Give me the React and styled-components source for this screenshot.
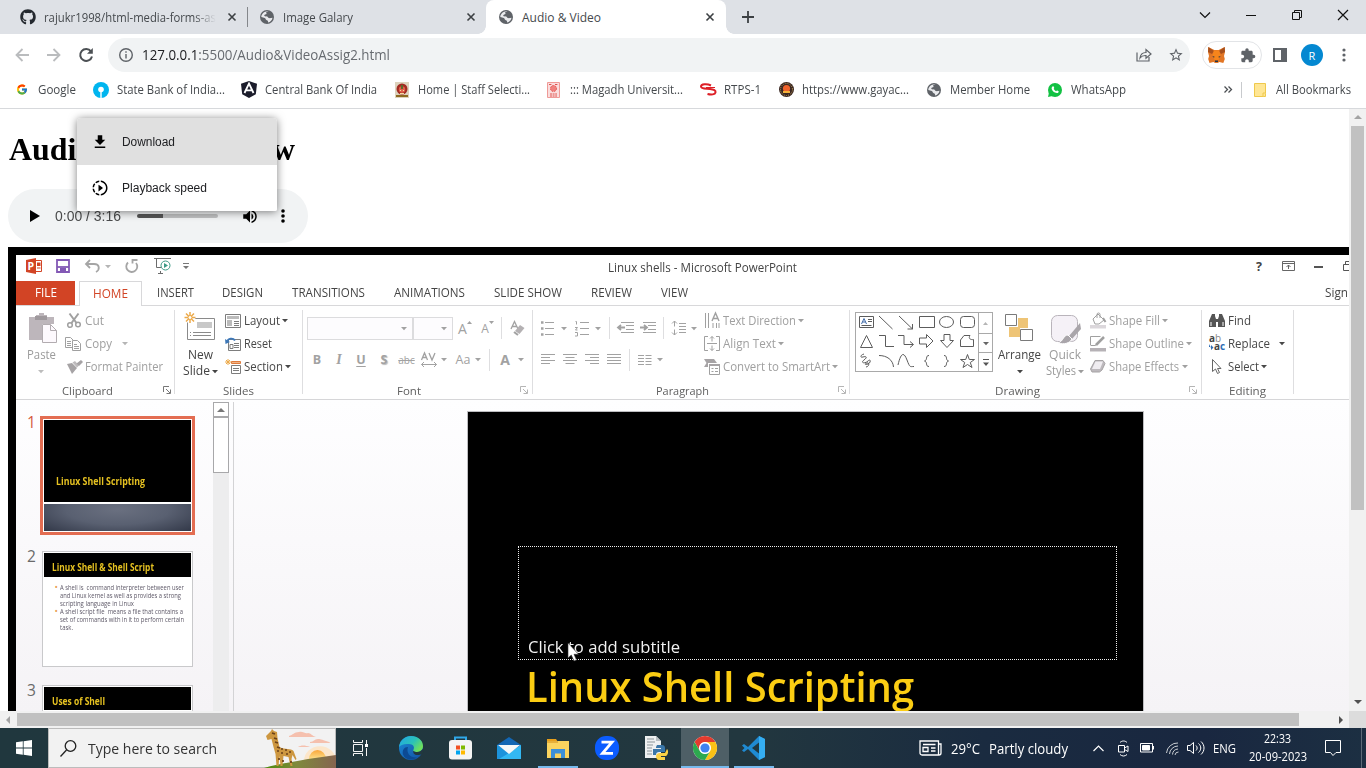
import React, { useLayoutEffect, useRef, useState } from "react";
import styled, { createGlobalStyle, css } from "styled-components";
import { FaGithub } from "react-icons/fa";
import { FcGoogle } from "react-icons/fc";
import { MdExtension, MdVolumeUp, MdStarBorder, MdSlowMotionVideo, MdFileDownload } from "react-icons/md";

const ui = `"Open Sans", "Noto Sans", sans-serif`;

const Global = createGlobalStyle`
  *, *::before, *::after { box-sizing: border-box; }
  html, body { margin: 0; padding: 0; overflow: hidden; }
  body { font-family: ${ui}; font-size: 12px; color: #3c4043; background: #fff; }
`;

/* ---------- text fitted to a measure ---------- */
const FitBox = styled.span`
  flex: none;
  display: block;
  white-space: pre;
  margin-left: ${(p) => p.$ml || 0}px;
  & > span { display: inline-block; transform-origin: 0 50%; }
`;

function Fit({ w, ml, children, className }) {
  const ref = useRef(null);
  const [k, setK] = useState(1);
  useLayoutEffect(() => {
    if (ref.current.offsetWidth) setK(w / parseFloat(getComputedStyle(ref.current).width));
  }, [w, children]);
  return (
    <FitBox $ml={ml} className={className} style={{ width: w }}>
      <span ref={ref} style={{ transform: `scaleX(${k})` }}>{children}</span>
    </FitBox>
  );
}

/* ---------- drawings ---------- */
const Svg = styled.svg`
  flex: none;
  display: block;
  overflow: visible;
  margin-left: ${(p) => p.$ml || 0}px;
`;
const Ico = ({ w = 16, h = 16, ml, vb, children, ...rest }) => (
  <Svg width={w} height={h} $ml={ml} viewBox={vb || `0 0 ${w} ${h}`} fill="none" stroke="currentColor" strokeWidth="1" {...rest}>
    {children}
  </Svg>
);
const IconHold = styled.span`
  flex: none;
  display: flex;
  width: ${(p) => p.$w || 16}px;
  justify-content: center;
  align-items: center;
  margin-left: ${(p) => p.$ml || 0}px;
  color: ${(p) => p.$c || "#5f6368"};
`;
const Globe = ({ ml }) => (
  <Ico w={14} h={14} ml={ml} vb="0 0 16 16" stroke="none">
    <circle cx="8" cy="8" r="8" fill="#5f6368" />
    <path fill="#e9eaed" d="M9.500 1.600C7 1.800 6.500 3 7.500 4c.6.8-1.700.8-2.500 1.800-.6 1 .5 1.700 2.300 1.500 1.500-.2 1.500 1.500 2.700 1.900 1.500.4 2.800-.3 4.300-.3-.4 2.800-2.400 4.900-5.100 5.400.1-1.500-.2-2.300-1.400-2.500-1.500-.3-1-2.100-2.300-2.600C4.200 8.700 3 8.500 1.500 8 1.500 4.800 5 1.200 9.500 1.600z" />
  </Ico>
);
const CloseX = ({ ml, c = "#3c4043" }) => (
  <Ico w={8} h={8} ml={ml} strokeWidth="1.600" style={{ color: c }}><path d="M.5.500l7 7M7.500.500l-7 7" /></Ico>
);

/* ---------- browser chrome ---------- */
const Screen = styled.div`
  width: 1366px;
  height: 768px;
  display: flex;
  flex-direction: column;
  overflow: hidden;
`;
const TabStrip = styled.div`
  flex: none;
  height: 34px;
  background: #dee1e6;
  display: flex;
  align-items: stretch;
`;
const Tab = styled.div`
  flex: none;
  position: relative;
  display: flex;
  align-items: center;
  width: ${(p) => p.$w}px;
  padding-left: ${(p) => p.$pl}px;
  color: #45494d;
  font-size: 12px;
  ${(p) => p.$on && css`
    background: #fff;
    border-radius: 8px 8px 0 0;
    &::before, &::after {
      content: "";
      position: absolute;
      bottom: 0;
      width: 8px;
      height: 8px;
    }
    &::before { left: -8px; background: radial-gradient(circle at 0 0, #dee1e6 7.5px, #fff 8px); }
    &::after { right: -8px; background: radial-gradient(circle at 100% 0, #dee1e6 7.5px, #fff 8px); }
  `}
`;
const FadedTitle = styled.div`
  margin-left: 8px;
  mask-image: linear-gradient(90deg, #000 150px, transparent 172px);
`;
const TabRule = styled.i`
  flex: none;
  width: 1px;
  height: 20px;
  margin: 7px 0 0;
  background: #84878b;
`;
const WindowButtons = styled.div`
  margin-left: auto;
  display: flex;
  height: 29px;
  color: #111;
  & > * { flex: none; width: 46px; display: flex; align-items: center; justify-content: center; }
`;
const Toolbar = styled.div`
  flex: none;
  height: 42px;
  display: flex;
  align-items: center;
`;
const Omnibox = styled.div`
  flex: none;
  width: 1082px;
  height: 34px;
  margin-left: 15px;
  padding-bottom: 1px;
  border-radius: 17px;
  background: #f1f3f4;
  display: flex;
  align-items: center;
  font-size: 14px;
  color: #676b70;
  b { font-weight: 400; color: #202124; }
`;
const ExtensionPill = styled.div`
  flex: none;
  width: 60px;
  height: 28px;
  margin-left: 12px;
  border: 1px solid #e2e4e7;
  border-radius: 14px;
  display: flex;
  align-items: center;
`;
const Avatar = styled.div`
  flex: none;
  width: 22px;
  height: 22px;
  margin-left: 14px;
  border-radius: 50%;
  background: #0488d1;
  color: #fff;
  font-size: 11px;
  display: grid;
  place-items: center;
`;
const Bookmarks = styled.div`
  flex: none;
  height: 33px;
  padding-bottom: 5px;
  border-bottom: 1px solid #d7d9dc;
  display: flex;
  align-items: center;
  font-size: 12px;
  color: #45494d;
`;
const BarRule = styled.i`
  flex: none;
  width: 1px;
  height: 16px;
  margin-left: 9px;
  background: #c8cacd;
`;

function Browser() {
  return (
    <>
      <TabStrip>
        <Tab $w={247} $pl={20}>
          <FaGithub size={16} color="#24292f" />
          <FadedTitle><Fit w={172}>rajukr1998/html-media-forms-as</Fit></FadedTitle>
          <CloseX ml={12} />
        </Tab>
        <TabRule />
        <Tab $w={238} $pl={12}><Globe /><Fit w={70} ml={9}>Image Galary</Fit><CloseX ml={114} /></Tab>
        <Tab $w={240} $pl={13} $on><Globe /><Fit w={79} ml={9}>Audio &amp; Video</Fit><CloseX ml={105} /></Tab>
        <IconHold $w={12} $ml={16}>
          <Ico w={12} h={12} strokeWidth="1.800" style={{ color: "#3c4043" }}><path d="M6 0v12M0 6h12" /></Ico>
        </IconHold>
        <WindowButtons>
          <span><Ico w={10} h={6} stroke="#111" strokeWidth="1.200"><path d="M0 .5l5 5 5-5" /></Ico></span>
          <span><Ico w={10} h={2}><path d="M0 1.500h10" /></Ico></span>
          <span><Ico w={10} h={10}><path d="M.5 2.500h7v7h-7zM2.500 2.500v-2h7v7h-2" /></Ico></span>
          <span><Ico w={10} h={10} strokeWidth="1.200"><path d="M0 0l10 10M10 0L0 10" /></Ico></span>
        </WindowButtons>
      </TabStrip>
      <Toolbar>
        <Ico w={14} h={14} ml={15} stroke="#babcbe" strokeWidth="1.800"><path d="M14 7H1.500M7.500 1L1.500 7l6 6" /></Ico>
        <Ico w={14} h={14} ml={18} stroke="#babcbe" strokeWidth="1.800"><path d="M0 7h12.500M6.500 1l6 6-6 6" /></Ico>
        <Ico w={14} h={14} ml={18} stroke="#4c5054" strokeWidth="2"><path d="M12 3.300A6 6 0 1 0 13 8.500" /><path d="M13.800 0v5.800H8z" fill="#4c5054" stroke="none" /></Ico>
        <Omnibox>
          <Ico w={14} h={14} ml={11} stroke="#5f6368" strokeWidth="1.400"><circle cx="7" cy="7" r="6.300" /><path d="M7 6v4.500M7 3.300v1.500" /></Ico>
          <Fit w={248} ml={9}><b>127.0.0.1</b>:5500/Audio&amp;VideoAssig2.html</Fit>
          <Ico w={16} h={16} ml={746} stroke="#5f6368" strokeWidth="1.200"><path d="M1 5.500V14h12v-4M4 11c.5-4 3-5.500 6-5.500V2.500l5 4.500-5 4.200V8.500C7 8.300 5.500 9 4 11z" /></Ico>
          <IconHold $ml={16}><MdStarBorder size={18} /></IconHold>
        </Omnibox>
        <ExtensionPill>
          <Ico w={17} h={16} ml={5} stroke="none">
            <path fill="#e27625" d="M.3 0l6 3h4.400l6-3 .3 5-1 4 .8 3-1.500 4-4-1-1.500 1H7l-1.500-1-4 1L.2 12 1 9 0 5z" />
            <path fill="#a8501c" d="M.3 0L6 4 4 7 0 5zM16.700 0L11 4l2 3 4-2z" />
            <path fill="#f6851b" d="M6 3.500h5L12.500 8l-2 5h-4l-2-5z" />
            <path fill="#233447" d="M4.300 9l2.400.7-.8 1.100zM12.700 9l-2.400.7.800 1.100zM7 13.500h3v1.500H7z" />
          </Ico>
          <IconHold $ml={15}><MdExtension size={17} /></IconHold>
        </ExtensionPill>
        <Ico w={14} h={14} ml={11} stroke="#5f6368" strokeWidth="2"><path d="M1 1h12v12H1z" /><path d="M9 1h4v12H9z" fill="#5f6368" /></Ico>
        <Avatar>R</Avatar>
        <Ico w={4} h={14} ml={19} stroke="none" fill="#5f6368"><circle cx="2" cy="2" r="1.600" /><circle cx="2" cy="7" r="1.600" /><circle cx="2" cy="12" r="1.600" /></Ico>
      </Toolbar>
      <Bookmarks>
        <IconHold $w={12} $ml={16}><FcGoogle size={13} /></IconHold>
        <Fit w={38} ml={10}>Google</Fit>
        <Ico w={16} h={16} ml={17} stroke="none"><circle cx="8" cy="8" r="8" fill="#00b5ef" /><circle cx="8" cy="7.500" r="2.800" fill="#fff" /><path d="M7.300 8h1.400v8H7.300z" fill="#fff" /></Ico>
        <Fit w={108} ml={8}>State Bank of India...</Fit>
        <Ico w={16} h={17} ml={16} stroke="none"><path fill="#1b1c2b" d="M0 2.800L8 0l8 2.800-1.200 10.500L8 17l-6.800-3.700z" /><path d="M3.500 12L8 2.500l4.500 9.500M5.500 9.300h5" stroke="#fff" strokeWidth="1.800" fill="none" /></Ico>
        <Fit w={112} ml={8}>Central Bank Of India</Fit>
        <Ico w={16} h={16} ml={17} stroke="none"><path fill="#ddd2bd" d="M1 0h14v16H1z" /><circle cx="8" cy="7" r="5.500" fill="#a32a22" /><circle cx="8" cy="7.500" r="3.200" fill="#e05f4a" /><path fill="#5a6a2a" d="M7 3h2v4H7z" /><path fill="#8d6a20" d="M2 13h12v2H2z" /><path fill="#f4dba0" d="M6 8h1v1H6zM9 8h1v1H9zM6 11h4v1H6z" /></Ico>
        <Fit w={112} ml={8}>Home | Staff Selecti...</Fit>
        <Ico w={13} h={16} ml={17} stroke="#e0524f"><path d="M.5.500h12v15H.5z" fill="#fadddd" stroke="#ef9a97" /><circle cx="6.500" cy="6.500" r="3" fill="#f0817e" strokeDasharray="1.500 1" /><path d="M2 2.500h3M8 2.500h3M3 12h7M3 14h7" strokeDasharray="2 .6" /></Ico>
        <Fit w={113} ml={10}>::: Magadh Universit...</Fit>
        <Ico w={16} h={13} ml={17} stroke="#dd1f26" strokeWidth="2"><path d="M11 2.500C7 .5 1 1 1 3.500S6 5.500 10 6s6 1.500 5.500 3.500-4 2.500-8 1.500" /><path d="M6 4.500h9" strokeWidth="1" /></Ico>
        <Fit w={37} ml={8}>RTPS-1</Fit>
        <Ico w={15} h={15} ml={18} stroke="none"><circle cx="7.500" cy="7.500" r="7.500" fill="#3a2722" /><circle cx="7.500" cy="7.500" r="6" fill="none" stroke="#c6a35a" strokeDasharray="1 1.200" /><circle cx="7.500" cy="6.500" r="3.600" fill="#f0622b" /><path fill="#f3b23a" d="M4 9h7v2H4z" /></Ico>
        <Fit w={107} ml={8}>https://www.gayac...</Fit>
        <Globe ml={18} />
        <Fit w={80} ml={9}>Member Home</Fit>
        <Ico w={14} h={14} ml={18} stroke="none"><circle cx="7" cy="7" r="7" fill="#12c143" /><path d="M0 14l1-4.500L4.500 13z" fill="#12c143" /><path fill="#fff" d="M4.500 3.500c.8-.6 1.300 0 1.700 1.200.2.700-.7.900-.4 1.400.5 1 1.300 1.700 2.200 2.100.5.200.8-.9 1.400-.6 1.300.6 1.500.9 1.100 1.600-.6 1-2 1.200-3.500.4-1.700-.9-2.900-2.300-3.300-3.700-.2-.9.100-1.900.8-2.400z" /></Ico>
        <Fit w={55} ml={9}>WhatsApp</Fit>
        <Ico w={8} h={7} ml={98} stroke="#4b4f53" strokeWidth="1.300"><path d="M.5.500l3 3-3 3M4.500.500l3 3-3 3" /></Ico>
        <BarRule />
        <Ico w={12} h={14} ml={12} stroke="#efc94c"><path d="M.5.500h11v13H.5z" fill="#ffe694" /><path d="M9 14v-4h3" fill="#ffe694" /></Ico>
        <Fit w={75} ml={10}>All Bookmarks</Fit>
      </Bookmarks>
    </>
  );
}

/* ---------- web page ---------- */
const Viewport = styled.div`
  flex: none;
  height: 602px;
  display: flex;
`;
const Page = styled.main`
  position: relative;
  width: 1349px;
  padding-left: 8px;
  overflow: hidden;
  background: #fff;
`;
const Heading = styled.h1`
  margin: 0;
  height: 80px;
  padding-top: 22px;
  font: bold 32px/36px "Liberation Serif", serif;
  color: #000;
`;
const Player = styled.div`
  width: 300px;
  height: 54px;
  border-radius: 27px;
  background: #f1f3f4;
  display: flex;
  align-items: center;
  color: #000;
  font: 14px "Liberation Sans", sans-serif;
`;
const PlayerTime = styled.div`
  margin-left: 15px;
  color: #4a4b4c;
`;
const Track = styled.div`
  width: 81px;
  height: 4px;
  margin-left: 16px;
  border-radius: 2px;
  background: linear-gradient(90deg, #555 26px, #bfc0c1 26px);
`;
const Menu = styled.div`
  position: absolute;
  left: 77px;
  top: 9px;
  width: 200px;
  border-radius: 4px 4px 2px 2px;
  overflow: hidden;
  box-shadow: 0 1px 8px rgba(0, 0, 0, 0.5);
`;
const MenuRow = styled.div`
  height: ${(p) => (p.$on ? 47 : 46)}px;
  background: ${(p) => (p.$on ? "#e0e0e0" : "#fff")};
  display: flex;
  align-items: center;
  padding-left: 14px;
  color: #202124;
  font: 12px "Liberation Sans", sans-serif;
`;
const VerticalBar = styled.div`
  width: 17px;
  background: #f1f1f1;
  display: flex;
  flex-direction: column;
  align-items: center;
  justify-content: space-between;
  padding: 6px 0 7px;
`;
const VerticalThumb = styled.i`
  width: 13px;
  height: 384px;
  margin: 7px 0 auto;
  background: #c1c1c1;
`;
const HorizontalBar = styled.div`
  flex: none;
  height: 17px;
  background: #f1f1f1;
  display: flex;
  align-items: center;
`;
const HorizontalThumb = styled.i`
  width: 1282px;
  height: 13px;
  margin-left: 7px;
  background: #c1c1c1;
`;
const BarCorner = styled.i`
  width: 17px;
  height: 17px;
  margin-left: auto;
  background: #dcdcdc;
`;

/* ---------- presentation window ---------- */
const Video = styled.div`
  width: 1341px;
  height: 464px;
  margin-top: 4px;
  padding: 8px 0 0 8px;
  background: #000;
`;
const Office = styled.div`
  width: 1333px;
  height: 456px;
  overflow: hidden;
  background: #fff;
  color: #444;
  font-size: 12px;
  display: flex;
  flex-direction: column;
`;
const QuickAccess = styled.div`
  flex: none;
  height: 26px;
  padding-bottom: 4px;
  display: flex;
  align-items: center;
`;
const WindowTitle = styled.div`
  padding-top: 3px;
`;
const RibbonTabs = styled.div`
  flex: none;
  height: 25px;
  border-bottom: 1px solid #d8d8da;
  display: flex;
  line-height: 24px;
  font-size: 12.5px;
`;
const FileTab = styled.div`
  width: 59px;
  padding-left: 19px;
  background: #d24425;
  color: #fff;
`;
const HomeTab = styled.div`
  width: 63px;
  height: 25px;
  margin-left: 4px;
  padding-left: 13px;
  border: 1px solid #d8d8da;
  border-bottom: 0;
  line-height: 23px;
  background: #fff;
  color: #d24425;
`;
const Ribbon = styled.div`
  flex: none;
  height: 94px;
  padding-top: 3px;
  border-bottom: 1px solid #d6d6d8;
  display: flex;
`;
const Group = styled.section`
  flex: none;
  width: ${(p) => p.$w}px;
  display: flex;
  flex-direction: column;
`;
const GroupBody = styled.div`
  height: 74px;
  display: flex;
`;
const GroupCaption = styled.div`
  height: 14px;
  display: flex;
  align-items: center;
  color: #606060;
  font-size: 11.5px;
`;
const Divider = styled.i`
  flex: none;
  width: 1px;
  height: ${(p) => p.$h || 84}px;
  margin-top: ${(p) => (p.$h ? 0 : 1)}px;
  margin-left: ${(p) => p.$ml || 0}px;
  background: #dedee0;
`;
const BigCommand = styled.div`
  flex: none;
  width: ${(p) => p.$w}px;
  padding-top: ${(p) => p.$pt || 3}px;
  color: ${(p) => (p.$off ? "#9b9b9b" : "#444")};
  font-size: 12.5px;
  line-height: 16px;
`;
const BigArt = styled.div`
  height: ${(p) => 35 - (p.$pt || 3)}px;
`;
const BigLine = styled.div`
  display: flex;
  align-items: center;
  height: 16px;
  margin-top: ${(p) => (p.$first ? 3 : 0)}px;
`;
const CommandList = styled.div`
  flex: none;
  width: ${(p) => p.$w}px;
`;
const Command = styled.div`
  height: 23px;
  display: flex;
  align-items: center;
  font-size: 12.5px;
  color: ${(p) => (p.$off ? "#a0a0a0" : "#484848")};
`;
const ToolRow = styled.div`
  height: ${(p) => p.$h}px;
  display: flex;
  align-items: center;
  color: #a2a2a2;
`;
const Tools = styled.div`
  flex: none;
  width: ${(p) => p.$w}px;
  padding-top: 2px;
`;
const Combo = styled.div`
  flex: none;
  width: ${(p) => p.$w}px;
  height: 23px;
  margin-left: ${(p) => p.$ml || 0}px;
  border: 1px solid #dcdcde;
  background: #fdfcfe;
  display: flex;
  align-items: center;
  justify-content: flex-end;
  padding-right: 5px;
`;
const Letter = styled.span`
  flex: none;
  width: ${(p) => p.$w}px;
  margin-left: ${(p) => p.$ml || 0}px;
  text-align: center;
  font-size: ${(p) => p.$s || 12.5}px;
  font-weight: ${(p) => (p.$b ? 700 : 400)};
  white-space: nowrap;
  ${(p) => p.$kind === "italic" && `font-style: italic; font-weight: 700; font-family: "Liberation Serif", serif;`}
  ${(p) => p.$kind === "under" && `text-decoration: underline; text-underline-offset: 2px;`}
  ${(p) => p.$kind === "shadow" && `text-shadow: 1px 1px 1px #bbb;`}
  ${(p) => p.$kind === "strike" && `text-decoration: line-through;`}
`;
const Caret = ({ ml = 0, c = "currentColor" }) => (
  <Ico w={6} h={3} ml={ml} stroke="none"><path d="M0 0h6L3 3.200z" fill={c} /></Ico>
);
const Launcher = ({ ml, off }) => (
  <Ico w={8} h={8} ml={ml} stroke={off ? "#b5b5b5" : "#777"}><path d="M.5 6V.5H6M3 3l4 4M7.500 3.500v4h-4" /></Ico>
);
const Gallery = styled.div`
  flex: none;
  width: 138px;
  height: 60px;
  margin: 3px 0 0 5px;
  border: 1px solid #a9a9a9;
  display: flex;
`;
const ShapeGrid = styled.div`
  width: 122px;
  display: grid;
  grid-template-columns: repeat(6, 20.2px);
  grid-template-rows: 18px 20px 20px;
  place-items: center;
  color: #5c5c5c;
`;
const GalleryScroll = styled.div`
  width: 14px;
  border-left: 1px solid #a9a9a9;
  display: grid;
  grid-template-rows: 20px 19px 19px;
  & > span { display: grid; place-items: center; }
  & > span + span { border-top: 1px solid #a9a9a9; }
`;
const AlignIcon = ({ ml, x = [0, 0], w = 9 }) => (
  <Ico w={14} h={12} ml={ml}><path d={`M0 .5h14M${x[0]} 3.500h${w}M0 6.500h14M${x[1]} 9.500h${w}`} /></Ico>
);

function RibbonView() {
  return (
    <Ribbon>
      <Group $w={158}>
        <GroupBody>
          <BigCommand $w={49} $off $pt={4}>
            <BigArt $pt={4}>
              <Ico w={31} h={31} ml={12} stroke="none">
                <path fill="#bdb6bb" d="M1 4h7V2h3V0h5v2h3v2h7v7H14v16H1z" /><path fill="#9f999d" d="M7 3h12v4H7z" />
                <path d="M14.500 11.500h8l6 6v12h-14z" fill="#fdf9fd" stroke="#b2acb0" /><path d="M22.500 11.500v6h6" fill="none" stroke="#b2acb0" />
              </Ico>
            </BigArt>
            <BigLine $first><Fit w={29} ml={11}>Paste</Fit></BigLine>
            <BigLine><Caret ml={22} c="#bcbcbc" /></BigLine>
          </BigCommand>
          <CommandList $w={100}>
            <Command $off>
              <Ico w={16} h={15} ml={1} strokeWidth="1.500"><path d="M3.500.500l7 9.500M12.500.500l-7 9.500" strokeWidth="2" /><circle cx="4" cy="12" r="2.300" /><circle cx="12" cy="11.500" r="2.300" /></Ico>
              <Fit w={19} ml={3}>Cut</Fit>
            </Command>
            <Command $off>
              <Ico w={16} h={14} ml={0}><path d="M.5.500h5l3 3v7h-8zM2 4.500h4M2 6.500h4M2 8.500h4" /><path d="M7.500 3.500h5l3 3v7h-8z" fill="#fff" /><path d="M9 7.500h3M9 9.500h5M9 11.500h5" /></Ico>
              <Fit w={27} ml={4}>Copy</Fit><Caret ml={10} c="#b5b5b5" />
            </Command>
            <Command $off>
              <Ico w={16} h={14} ml={2} stroke="none" fill="#a6a3a5"><path d="M0 4l5-1 5 5-5 6z" /><path d="M5.500 2.500L8 1l4 4.500-2 2z" fill="#bdbabc" /><path d="M9.500 3.500L14 0l2 2-4 4z" /></Ico>
              <Fit w={78} ml={2}>Format Painter</Fit>
            </Command>
          </CommandList>
        </GroupBody>
        <GroupCaption><Fit w={51} ml={46}>Clipboard</Fit><Launcher ml={50} /></GroupCaption>
      </Group>
      <Divider />
      <Group $w={127}>
        <GroupBody>
          <BigCommand $w={50}>
            <BigArt>
              <Ico w={31} h={28} ml={9}>
                <path d="M3.500 6.500h27v21h-27z" stroke="#8a8a8a" fill="#fff" /><path d="M13 10h15v6H13z" fill="#c8c8c8" stroke="none" />
                <path d="M9 20.500h18M9 23.500h18" stroke="#8a8a8a" /><path d="M6 20.500h1M6 23.500h1" stroke="#8a8a8a" />
                <circle cx="6" cy="5.500" r="5.500" fill="#fff" stroke="none" /><path d="M6 0v11M.5 5.500h11M2 1.500l8 8M10 1.500l-8 8" stroke="#ecaa4b" strokeWidth="1.500" /><circle cx="6" cy="5.500" r="2" fill="#fff" stroke="#ecaa4b" />
              </Ico>
            </BigArt>
            <BigLine $first><Fit w={25} ml={13}>New</Fit></BigLine>
            <BigLine><Fit w={27} ml={8}>Slide</Fit><Caret ml={2} /></BigLine>
          </BigCommand>
          <CommandList $w={77}>
            <Command>
              <Ico w={16} h={14} stroke="#7d7d7d"><path d="M.5.500h15v13H.5z" /><path d="M2 2h12v3H2zM2 6h5v6H2z" fill="#bbb" stroke="none" /><path d="M9 7.500h5M9 9.500h5M9 11.500h5" /></Ico>
              <Fit w={36} ml={3}>Layout</Fit><Caret ml={2} />
            </Command>
            <Command>
              <Ico w={16} h={14} stroke="#7d7d7d"><path d="M3.500 2.500h12v11h-12z" /><path d="M9 6.500h5M9 8.500h5M9 10.500h5M5 7.500h3v4H5z" /><path d="M2 5c1-4 6-4.500 8-1.500" stroke="#3e78b8" strokeWidth="1.800" /><path d="M0 2l.5 5 4.500-2z" fill="#3e78b8" stroke="none" /></Ico>
              <Fit w={28} ml={3}>Reset</Fit>
            </Command>
            <Command>
              <Ico w={16} h={15} stroke="#7d7d7d"><path d="M6.500 2.500h9v2h-9z" stroke="#df7a3a" fill="#f0b488" /><path d="M6.500 6.500h9v8h-9zM8 9.500h6M8 11.500h6" /><path d="M3 0v6M0 3h6M1 1l4 4M5 1L1 5" stroke="#ecaa4b" /></Ico>
              <Fit w={39} ml={3}>Section</Fit><Caret ml={2} />
            </Command>
          </CommandList>
        </GroupBody>
        <GroupCaption><Fit w={31} ml={48}>Slides</Fit></GroupCaption>
      </Group>
      <Divider />
      <Group $w={229}>
        <GroupBody>
          <Tools $w={229}>
            <ToolRow $h={34}>
              <Combo $w={106} $ml={4}><Caret /></Combo>
              <Combo $w={40}><Caret /></Combo>
              <Letter $w={9} $ml={5} $s={14}>A</Letter><Ico w={5} h={14} stroke="none"><path d="M0 3h5L2.500 0z" fill="currentColor" /></Ico>
              <Letter $w={8} $ml={9} $s={12}>A</Letter><Ico w={5} h={14} stroke="none"><path d="M0 0h5L2.500 3z" fill="currentColor" /></Ico>
              <Divider $h={22} $ml={7} />
              <Ico w={15} h={15} ml={8}><path d="M1 8L4.500.500 8 8M2.500 5.500H7" strokeWidth="1.300" /><path d="M5 10l5-6 4.500 3-5 6z" fill="#b4b1b3" stroke="none" /><path d="M4 11l4 3" strokeWidth="2" /></Ico>
            </ToolRow>
            <ToolRow $h={29}>
              <Letter $w={12} $ml={8} $b>B</Letter>
              <Letter $w={12} $ml={10} $s={14} $kind="italic">I</Letter>
              <Letter $w={12} $ml={10} $b $kind="under">U</Letter>
              <Letter $w={12} $ml={11} $b $kind="shadow">S</Letter>
              <Letter $w={17} $ml={8} $s={10} $kind="strike">abc</Letter>
              <Ico w={16} h={15} ml={6}><path d="M.5 8l3-7 3 7M1.500 5.500h4M8 1l3 7 3-7" strokeWidth="1.300" /><path d="M.5 12.500h15M3 10l-2.500 2.500L3 15M13 10l2.500 2.500L13 15" /></Ico>
              <Caret ml={4} />
              <Letter $w={16} $ml={8} $s={12.5}>Aa</Letter><Caret ml={4} />
              <Divider $h={22} $ml={8} />
              <Letter $w={12} $ml={9} $s={14} $b>A</Letter><Caret ml={7} />
            </ToolRow>
          </Tools>
        </GroupBody>
        <GroupCaption><Fit w={24} ml={94}>Font</Fit><Launcher ml={99} off /></GroupCaption>
      </Group>
      <Divider />
      <Group $w={316}>
        <GroupBody>
          <Tools $w={171}>
            <ToolRow $h={34}>
              <Ico w={13} h={15} ml={8}><path d="M4 1.500h9M4 7.500h9M4 13.500h9" /><path d="M0 1.500h2.500M0 7.500h2.500M0 13.500h2.500" strokeWidth="2.500" /></Ico><Caret ml={7} />
              <Ico w={14} h={15} ml={8}><path d="M5 1.500h9M5 7.500h9M5 13.500h9M.5.500h1v3M0 6.500h2.500l-2 2.500h2M0 11.500h2.500v3.500H0" /></Ico><Caret ml={6} />
              <Divider $h={22} $ml={8} />
              <Ico w={16} h={12} ml={8}><path d="M3 .5h13M8 3.500h8M8 7.500h8M3 10.500h13" /><path d="M7 5.500H0M3 3L0 5.500 3 8" strokeWidth="1.800" /></Ico>
              <Ico w={16} h={12} ml={6}><path d="M3 .5h13M8 3.500h8M8 7.500h8M3 10.500h13" /><path d="M0 5.500h7M4 3l3 2.500L4 8" strokeWidth="1.800" /></Ico>
              <Divider $h={22} $ml={7} />
              <Ico w={14} h={16} ml={8}><path d="M7 3.500h7M7 6.500h7M7 9.500h7M7 12.500h7M2.500 1v5.500M2.500 9.500V15M0 3.500L2.500 1 5 3.500M0 12.500L2.500 15 5 12.500" /></Ico><Caret ml={5} />
            </ToolRow>
            <ToolRow $h={29}>
              <AlignIcon ml={8} /><AlignIcon ml={8} x={[2.5, 2.5]} /><AlignIcon ml={8} x={[5, 5]} /><AlignIcon ml={8} w={14} />
              <Divider $h={22} $ml={8} />
              <Ico w={13} h={10} ml={8}><path d="M0 .5h6M7.500.500h6M0 3.500h6M7.500 3.500h6M0 6.500h6M7.500 6.500h6M0 9.500h6M7.500 9.500h6" /></Ico><Caret ml={6} />
            </ToolRow>
          </Tools>
          <CommandList $w={145}>
            <Command $off>
              <Ico w={16} h={16}><path d="M1.500 0v15M4.500 0v15M9 10v5M12.500 10v5M15 10v5" /><path d="M8 8l3.500-8L15 8M9 5.500h5" strokeWidth="1.400" /></Ico>
              <Fit w={73} ml={3}>Text Direction</Fit><Caret ml={2} />
            </Command>
            <Command $off>
              <Ico w={16} h={15}><path d="M4 .5H.5v14H4M12 .5h3.500v14H12M3 7.500h10M8 .5v5M8 14.500v-5M6 2.500l2-2 2 2M6 12.500l2 2 2-2" /></Ico>
              <Fit w={53} ml={3}>Align Text</Fit><Caret ml={2} />
            </Command>
            <Command $off>
              <Ico w={16} h={16}><path d="M0 0h10l3 4H4v4H0l2.500-4z" fill="#a6a3a5" stroke="none" /><path d="M5.500 5.500h10v10h-10z" fill="#fff" /><path d="M5 5h11v2H5z" fill="#a6a3a5" stroke="none" /><path d="M7.500 9.500h2M11 9.500h3M7.500 12.500h2M11 12.500h3" /></Ico>
              <Fit w={107} ml={3}>Convert to SmartArt</Fit><Caret ml={2} />
            </Command>
          </CommandList>
        </GroupBody>
        <GroupCaption><Fit w={53} ml={123}>Paragraph</Fit><Launcher ml={129} off /></GroupCaption>
      </Group>
      <Divider />
      <Group $w={351}>
        <GroupBody>
          <Gallery>
            <ShapeGrid>
              <Ico w={15} h={12}><path d="M.5.500h14v11H.5z" /><path d="M2.500 8L5 2.500 7.500 8M3.500 6h3" stroke="#3c68a8" /><path d="M9 3.500h4M9 5.500h4M2.500 9.500h10" /></Ico>
              <Ico w={14} h={13}><path d="M0 0l13.500 13" /></Ico>
              <Ico w={14} h={13}><path d="M0 0l13.500 13M13.500 8v5h-5" /></Ico>
              <Ico w={16} h={12}><path d="M.5.500h15v11H.5z" /></Ico>
              <Ico w={15} h={12}><ellipse cx="7.500" cy="6" rx="7" ry="5.500" /></Ico>
              <Ico w={15} h={12}><rect x=".5" y=".5" width="14" height="11" rx="3" /></Ico>
              <Ico w={13} h={13}><path d="M6.500.500L12.500 12.500H.5z" /></Ico>
              <Ico w={15} h={12}><path d="M0 .5h6.500v11H15" /></Ico>
              <Ico w={16} h={13}><path d="M0 .5h6v9h9M12 6.500l3.500 3-3.500 3" /></Ico>
              <Ico w={15} h={14}><path d="M.5 4h7V.5L14 7l-6.500 6.500V10h-7z" /></Ico>
              <Ico w={14} h={14}><path d="M4 .5h6v6h3.500L7 13.500.500 6.500H4z" /></Ico>
              <Ico w={14} h={12}><path d="M4 .5h6c-2 3 .5 4.500 3.500 4v7H.5V5z" /></Ico>
              <Ico w={12} h={14}><path d="M4 0C0 1 0 4 3 3s5 0 1 3 1 4 4 1 3 2 0 3-4 0-1-1 2 4-1 4" /></Ico>
              <Ico w={15} h={12}><path d="M0 .5C8 .5 14 5 14.500 12" /></Ico>
              <Ico w={16} h={12}><path d="M0 10C3-3 6-3 9 5s3 6.500 7 6.500" /></Ico>
              <Ico w={5} h={12}><path d="M5 .5C1 .5 4 5 .5 6 4 7 1 11.500 5 11.500" /></Ico>
              <Ico w={5} h={12}><path d="M0 .5c4 0 1 4.500 4.500 5.500C1 7 4 11.500 0 11.500" /></Ico>
              <Ico w={15} h={14}><path d="M7.500.500l1.800 5h5.200l-4.200 3 1.700 5-4.500-3-4.500 3 1.700-5-4.200-3h5.200z" /></Ico>
            </ShapeGrid>
            <GalleryScroll>
              <span><Ico w={5} h={3} stroke="none"><path d="M0 3h5L2.500 0z" fill="#b5b5b5" /></Ico></span>
              <span><Caret c="#666" /></span>
              <span><Ico w={6} h={7} stroke="none"><path d="M0 0h6v1H0zM0 3.500h6L3 7z" fill="#555" /></Ico></span>
            </GalleryScroll>
          </Gallery>
          <BigCommand $w={50} $pt={5}>
            <BigArt $pt={5}>
              <Ico w={28} h={28} ml={12} stroke="#7a7a7a">
                <path d="M13 4h10v10H13zM4 13h11v10H4z" fill="#eec476" stroke="none" /><path d="M.5.500h11v11H.5zM15.500 15.500h12v11h-12z" fill="#fff" />
              </Ico>
            </BigArt>
            <BigLine $first><Fit w={43} ml={5}>Arrange</Fit></BigLine>
            <BigLine><Caret ml={24} /></BigLine>
          </BigCommand>
          <BigCommand $w={46} $off $pt={6}>
            <BigArt $pt={6}>
              <Ico w={30} h={30} ml={8}>
                <rect x=".5" y=".5" width="26" height="26" rx="6" fill="#f5f1f7" stroke="#b9b4bb" />
                <path d="M29 8L18 21l3 3 9-10z" fill="#a9a5aa" stroke="none" /><path d="M17 20c-5 0-4 6-10 8 6 2 12 0 14-4z" fill="#a9a5aa" stroke="#fff" />
              </Ico>
            </BigArt>
            <BigLine $first><Fit w={32} ml={6}>Quick</Fit></BigLine>
            <BigLine><Fit w={30} ml={3}>Styles</Fit><Caret ml={2} /></BigLine>
          </BigCommand>
          <CommandList $w={112}>
            <Command $off>
              <Ico w={16} h={16} ml={1}><path d="M3 6l5-5 6 6-5 4-4 0z" fill="#fff" /><path d="M7 5V1.500A1.500 1.500 0 0 1 10 1.500V5" /><path d="M13 5l2.500 4" strokeWidth="2" /><path d="M0 12h16v3.500H0z" fill="#dbd7db" stroke="none" /></Ico>
              <Fit w={51} ml={3}>Shape Fill</Fit><Caret ml={2} />
            </Command>
            <Command $off>
              <Ico w={16} h={16} ml={1}><path d="M.5 9V.5h10M.5 9.500h5M5 9.500L14 1" /><path d="M6 9L14 1" strokeWidth="2.500" /><path d="M0 12h16v3.500H0z" fill="#b6b2b6" stroke="none" /></Ico>
              <Fit w={75} ml={3}>Shape Outline</Fit><Caret ml={2} />
            </Command>
            <Command $off>
              <Ico w={16} h={13} ml={1}><path d="M5 .5h8l2 3-3 6.500-2.500 2H2L.5 9z" fill="#bdb9bd" stroke="#a6a3a5" /><path d="M5.500 1.500h7.500L10 9H2z" fill="#f0edf1" stroke="none" /></Ico>
              <Fit w={70} ml={3}>Shape Effects</Fit><Caret ml={3} />
            </Command>
          </CommandList>
        </GroupBody>
        <GroupCaption><Fit w={45} ml={145}>Drawing</Fit><Launcher ml={149} off /></GroupCaption>
      </Group>
      <Divider />
      <Group $w={91}>
        <GroupBody>
          <CommandList $w={91}>
            <Command>
              <Ico w={16} h={14} ml={7} stroke="none" fill="#555"><path d="M3 0h3v2l1 3v8H0V7zM10 0h3l3 7v6H9V5l1-3zM6 5h4v3H6z" /><path d="M2 8v4M14 8v4" stroke="#fff" /></Ico>
              <Fit w={23} ml={3}>Find</Fit>
            </Command>
            <Command>
              <Ico w={16} h={15} ml={7} stroke="none" fill="#444" fontFamily="Open Sans" fontSize="10" fontWeight="700">
                <text x="0" y="6">a<tspan fill="#888" fontWeight="400">b</tspan></text><text x="5" y="14">a<tspan fill="#2e6db4">c</tspan></text><path d="M0 8v3h2V9l2.500 2.500L2 14v-2" fill="#2e6db4" />
              </Ico>
              <Fit w={42} ml={3}>Replace</Fit><Caret ml={9} />
            </Command>
            <Command>
              <Ico w={10} h={15} ml={10} stroke="#666"><path d="M.5.500v12l3-2.500 2 4.500 2-1-2-4h3.500z" /></Ico>
              <Fit w={31} ml={6}>Select</Fit><Caret ml={2} />
            </Command>
          </CommandList>
        </GroupBody>
        <GroupCaption><Fit w={37} ml={27}>Editing</Fit></GroupCaption>
      </Group>
      <Divider />
    </Ribbon>
  );
}

const Workspace = styled.div`
  flex: 1;
  min-height: 0;
  display: flex;
  background: linear-gradient(#fefeff, #f5f3f6);
`;
const ThumbPane = styled.div`
  width: 197px;
  height: 311px;
  padding-top: 16px;
  overflow: hidden;
`;
const ThumbRow = styled.div`
  display: flex;
  align-items: flex-start;
  margin-bottom: ${(p) => p.$mb || 0}px;
`;
const SlideNo = styled.span`
  width: ${(p) => (p.$on ? 24 : 26)}px;
  margin-top: ${(p) => (p.$on ? -1 : -2)}px;
  padding-left: 11px;
  font-size: 15.5px;
  line-height: 15px;
  color: ${(p) => (p.$on ? "#d5583e" : "#6a6a6a")};
`;
const Thumb = styled.div`
  width: ${(p) => (p.$on ? 155 : 151)}px;
  height: ${(p) => (p.$on ? 119 : 116)}px;
  border: ${(p) => (p.$on ? "3px solid #e36d52" : "1px solid #c9c9cb")};
  padding: 1px;
  background: #fff;
`;
const ThumbDark = styled.div`
  height: ${(p) => p.$h}px;
  padding-top: ${(p) => p.$pt}px;
  background: #000;
  color: #e5c121;
  font-size: 10px;
  font-weight: 700;
  line-height: 12px;
`;
const ThumbFloor = styled.div`
  height: 27px;
  margin-top: 2px;
  background: radial-gradient(ellipse at 50% 20%, #6a7080 0, #596071 50%, #323848 100%);
`;
const ThumbBody = styled.div`
  padding-top: 7px;
  color: #5e5968;
  font-size: 6.5px;
  line-height: 8.1px;
`;
const BulletLine = styled.div`
  display: flex;
  height: 8.1px;
  &::before { content: "${(p) => (p.$dot ? "•" : "")}"; width: 16px; padding-left: 11px; font-weight: 700; color: #e89b4a; }
`;
const PaneScroll = styled.div`
  width: 16px;
  margin-top: 2px;
  background: #ededee;
`;
const PaneScrollUp = styled.div`
  height: 15px;
  border: 1px solid #a8a8aa;
  background: #fff;
  display: grid;
  place-items: center;
`;
const PaneScrollThumb = styled.div`
  height: 56px;
  border: 1px solid #a8a8aa;
  background: #fff;
`;
const PaneEdge = styled.i`
  width: 1px;
  margin: 2px 0 0 4px;
  background: #d3d3d5;
`;
const Slide = styled.div`
  width: 675px;
  height: 299px;
  margin: 12px 0 0 234px;
  padding: 134px 0 0 50px;
  background: #000;
  box-shadow: 0 0 0 1px #bdbdc0;
  overflow: hidden;
`;
const Placeholder = styled.div`
  position: relative;
  width: 599px;
  height: 114px;
  border: 1px dotted #ededed;
  padding: 88px 0 0 9px;
  color: #f2f2f2;
  font: 16.5px/24px ${ui};
`;
const Pointer = styled.div`
  position: absolute;
  left: 49px;
  top: 96px;
`;
const SlideTitle = styled.div`
  padding-left: 8px;
  color: #fbcd13;
  font: 600 42px/52px ${ui};
`;

function Presentation() {
  return (
    <Office>
      <QuickAccess>
        <Ico w={16} h={16} ml={10} stroke="none">
          <path d="M9 2.500h6.500v11H9" stroke="#d24425" fill="#fff" /><path d="M11 4.500h3.500v3.500H11zM11 9.500h3.500v1H11z" fill="#d24425" /><path fill="#d24425" d="M0 2l10-2v16L0 14z" />
          <text x="1.500" y="12" fill="#fff" fontFamily="Open Sans" fontSize="10.500" fontWeight="700">P</text>
        </Ico>
        <Ico w={14} h={14} ml={14} stroke="#8359b5" strokeWidth="1.800"><path d="M1 1h12v12H1z" /><path d="M1 8h12" /><path d="M4 9h6v4H4z" fill="#8359b5" stroke="none" /></Ico>
        <Ico w={15} h={12} ml={15} stroke="#a5a5a5" strokeWidth="1.800"><path d="M1 4h8c6 0 6 6 2 8M5 0L1 4l4 4" /></Ico>
        <Caret ml={5} c="#b5b5b5" />
        <Ico w={14} h={14} ml={14} stroke="#a5a5a5" strokeWidth="1.800"><path d="M3 3.500A5.500 5.500 0 1 0 11 4M7.500 4.500V1h5" /></Ico>
        <Ico w={17} h={16} ml={15} stroke="#6c6c6c"><path d="M0 .5h17M2.500 1v8.500h5M4 15.500h5M6.500 13v2" /><circle cx="11.500" cy="7.500" r="4.500" fill="#fff" stroke="#3c9a86" /><path d="M10 5l4 2.500-4 2.500z" fill="#3c9a86" stroke="none" /></Ico>
        <Ico w={6} h={6} ml={12} stroke="none" fill="#777"><path d="M0 0h6v1H0zM0 3h6L3 6z" /></Ico>
        <WindowTitle><Fit w={189} ml={419}>Linux shells - Microsoft PowerPoint</Fit></WindowTitle>
        <Letter $w={8} $ml={458} $s={12.5} $b>?</Letter>
        <Ico w={13} h={10} ml={19} stroke="#666"><path d="M.5.500h12v9H.5zM.5 2.500h12M6.500 8V4M4.500 6l2-2 2 2" /></Ico>
        <Ico w={9} h={4} ml={19} stroke="#555" strokeWidth="2"><path d="M0 3h9" /></Ico>
        <Ico w={10} h={10} ml={20} stroke="#555"><path d="M.5 3.500h7v6h-7zM2.500 3V.5h7v6H8" /></Ico>
      </QuickAccess>
      <RibbonTabs>
        <FileTab><Fit w={22}>FILE</Fit></FileTab>
        <HomeTab><Fit w={35}>HOME</Fit></HomeTab>
        <Fit w={37} ml={15}>INSERT</Fit>
        <Fit w={41} ml={28}>DESIGN</Fit>
        <Fit w={73} ml={29}>TRANSITIONS</Fit>
        <Fit w={71} ml={29}>ANIMATIONS</Fit>
        <Fit w={68} ml={29}>SLIDE SHOW</Fit>
        <Fit w={41} ml={29}>REVIEW</Fit>
        <Fit w={27} ml={29}>VIEW</Fit>
        <Fit w={23} ml={637}>Sign</Fit>
      </RibbonTabs>
      <RibbonView />
      <Workspace>
        <ThumbPane>
          <ThumbRow $mb={16}>
            <SlideNo $on>1</SlideNo>
            <Thumb $on>
              <ThumbDark $h={82} $pt={55}><Fit w={89} ml={12}>Linux Shell Scripting</Fit></ThumbDark>
              <ThumbFloor />
            </Thumb>
          </ThumbRow>
          <ThumbRow $mb={18}>
            <SlideNo>2</SlideNo>
            <Thumb>
              <ThumbDark $h={24} $pt={8}><Fit w={102} ml={8}>Linux Shell &amp; Shell Script</Fit></ThumbDark>
              <ThumbBody>
                <BulletLine $dot><Fit w={124}>A shell is  command interpreter between user</Fit></BulletLine>
                <BulletLine><Fit w={121}>and Linux kernel as well as provides a strong</Fit></BulletLine>
                <BulletLine><Fit w={74}>scripting language in Linux</Fit></BulletLine>
                <BulletLine $dot><Fit w={123}>A shell script file  means a file that contains a</Fit></BulletLine>
                <BulletLine><Fit w={124}>set of commands with in it to perform certain</Fit></BulletLine>
                <BulletLine><Fit w={13}>task.</Fit></BulletLine>
              </ThumbBody>
            </Thumb>
          </ThumbRow>
          <ThumbRow>
            <SlideNo>3</SlideNo>
            <Thumb><ThumbDark $h={23} $pt={8}><Fit w={53} ml={8}>Uses of Shell</Fit></ThumbDark></Thumb>
          </ThumbRow>
        </ThumbPane>
        <PaneScroll>
          <PaneScrollUp><Ico w={8} h={4} stroke="none"><path d="M0 4h8L4 0z" fill="#777" /></Ico></PaneScrollUp>
          <PaneScrollThumb />
        </PaneScroll>
        <PaneEdge />
        <Slide>
          <Placeholder>
            <Fit w={152}>Click to add subtitle</Fit>
            <Pointer><Ico w={11} h={18} stroke="#333" strokeWidth=".6"><path d="M0 0v15l3.300-3 2.700 6 2.500-1-2.500-5.700h4.500z" fill="#fff" /></Ico></Pointer>
          </Placeholder>
          <SlideTitle><Fit w={388}>Linux Shell Scripting</Fit></SlideTitle>
        </Slide>
      </Workspace>
    </Office>
  );
}

/* ---------- taskbar ---------- */
const Taskbar = styled.footer`
  flex: none;
  height: 40px;
  display: flex;
  align-items: center;
  background: linear-gradient(90deg, #20373e 0, #22373f 55%, #1a2b40 72%, #192740 88%, #1c2f42 100%);
  color: #fff;
`;
const StartButton = styled.div`
  width: 48px;
  display: grid;
  place-items: center;
`;
const SearchBox = styled.div`
  width: 288px;
  height: 40px;
  border: 1px solid #bcbcbc;
  background: #f2f2f2;
  color: #333;
  display: flex;
  align-items: center;
  font-size: 15px;
`;
const AppButton = styled.div`
  flex: none;
  width: 48px;
  height: 40px;
  margin-left: ${(p) => p.$ml ?? 1}px;
  display: grid;
  place-items: center;
  background: ${(p) => (p.$on ? "#4e5f66" : "none")};
  box-shadow: ${(p) => (p.$on ? "inset 0 -2px #76b9ed" : "none")};
  position: relative;
  ${(p) => p.$open && css`
    &::after { content: ""; position: absolute; left: 4px; right: 4px; bottom: 0; height: 2px; background: #76b9ed; }
  `}
`;
const TrayText = styled.div`
  display: flex;
  align-items: center;
  font-size: ${(p) => p.$s || 14}px;
  margin-left: ${(p) => p.$ml || 0}px;
`;
const Clock = styled.div`
  width: 59px;
  margin-left: 12px;
  display: flex;
  flex-direction: column;
  align-items: center;
  font-size: 12px;
  line-height: 18px;
  padding-bottom: 1px;
`;
const ShowDesktop = styled.i`
  width: 1px;
  height: 40px;
  margin-left: 20px;
  background: #5c6b78;
`;

function TaskbarView() {
  return (
    <Taskbar>
      <StartButton><Ico w={16} h={16} stroke="none" fill="#fff"><path d="M0 2.200l6.800-.9v6.300H0zM7.600 1.200L16 0v7.600H7.600zM0 8.400h6.800v6.300L0 13.800zM7.600 8.400H16V16l-8.400-1.200z" /></Ico></StartButton>
      <SearchBox>
        <Ico w={17} h={17} ml={11} stroke="#222" strokeWidth="1.300"><circle cx="10.500" cy="6" r="5.300" /><path d="M6.500 10L.5 16.500" /></Ico>
        <Fit w={129} ml={11}>Type here to search</Fit>
        <Ico w={72} h={38} ml={47} stroke="none">
          <defs>
            <linearGradient id="hill" x1="0" x2="1"><stop offset="0" stopColor="#4b8a0a" /><stop offset=".45" stopColor="#7f8a3c" /><stop offset="1" stopColor="#85644f" /></linearGradient>
            <linearGradient id="sun" x1="0" x2="0" y1="0" y2="1"><stop offset="0" stopColor="#f9a63a" /><stop offset="1" stopColor="#fde08a" /></linearGradient>
          </defs>
          <path fill="#f5c0ae" d="M25 7c4-1 5-4 10-4 4-1 6 2 9 1 3 0 4 3 8 4H25zM46 13c4 0 4-3 8-3 3 0 5 1 11 3 1 1 2 1 2 1H46zM34 18c3-2 7-2 12 0z" />
          <path fill="#fce6ca" d="M40 32a13 12 0 0 1 32 0z" /><path fill="url(#sun)" d="M45 30a8.500 9 0 0 1 17 0z" />
          <path fill="url(#hill)" d="M0 39c12-4 30-6 44-9l28-4v13z" />
          <path fill="#cd9740" d="M2 7l5-5 1-2 2 2 3 1 .5 6 2 9c6 3 11 1 14 4l3 8-1 1-3-5-1 4 1 7h-2l-2-9-5-1-1 10h-2l-1-10-1 10h-2l-1-12-2-7-2-8-4 1z" />
          <path d="M8 4l3 1M10 9l3 1M11 13l3 1M13 18l3 1M17 20h2M21 21h2M25 23h2M17 24h2M22 25h2M15 29v2M19 31v2M27 32v2M13 22h2" stroke="#6b4119" strokeWidth="1.700" fill="none" />
        </Ico>
      </SearchBox>
      <AppButton $ml={0}><Ico w={17} h={16} stroke="#f4f4f4"><path d="M1.500 0v2.500h9V0M1.500 16v-2.500h9V16M1.500 4.500h9v7h-9zM14.500 0v4M14.500 8v8" /><path d="M13 4h3v3h-3z" fill="#fff" stroke="none" /></Ico></AppButton>
      <AppButton $ml={3}>
        <Ico w={24} h={24} stroke="none">
          <defs>
            <linearGradient id="edgeA" x1="0" y1="0" x2="1" y2=".6"><stop offset="0" stopColor="#21a5e8" /><stop offset=".6" stopColor="#2bc2b8" /><stop offset="1" stopColor="#6fe05a" /></linearGradient>
            <linearGradient id="edgeB" x1="0" y1="0" x2="1" y2="1"><stop offset="0" stopColor="#1b8ad8" /><stop offset="1" stopColor="#1250a0" /></linearGradient>
          </defs>
          <circle cx="12" cy="12" r="12" fill="url(#edgeB)" />
          <path fill="url(#edgeA)" d="M0 11C1 4 6 0 12 0c7 0 12 4.500 12 10 0 4-3 6-6 6-3 0-4.500-1-3.500-2.500C16 11 14 8 10 8 5 7.500 1 9 0 11z" />
          <path fill="#0c4a94" d="M9 11c-2 6 2 11 9 10.500-5 3.500-12 2.500-14-3-1-4 1-7.500 5-7.500z" />
          <path fill="#22373f" d="M14.500 13.500C13.500 15 15 16 18 16c2 0 3.700-.8 4.800-2l1.200-1 .5 3-1.500 2c-1 .8-2.500 1-5 1-3 0-4.500-2.500-3.500-5.500z" />
        </Ico>
      </AppButton>
      <AppButton>
        <Ico w={23} h={24} stroke="none"><path d="M6 5V1.500h11V5" stroke="#2fa8ea" strokeWidth="2" fill="none" /><rect y="4" width="23" height="19.500" rx="3" fill="#f4f4f4" /><path fill="#f25022" d="M7 9.500h4v4H7z" /><path fill="#7fba00" d="M12 9.500h4v4h-4z" /><path fill="#00a4ef" d="M7 14.500h4v4H7z" /><path fill="#ffb900" d="M12 14.500h4v4h-4z" /></Ico>
      </AppButton>
      <AppButton>
        <Ico w={24} h={24} stroke="none"><path fill="#1266b4" d="M0 9L12 1l12 8v4H0z" /><path fill="#2bb1f0" d="M0 9v14h24V9L12 18z" /><path fill="#1c93dc" d="M0 9l24 14H0z" /><path fill="#33b8f3" d="M24 9L12 17 2 23h22z" /><path fill="#f5f7f8" d="M1 9h22l-11 9z" /></Ico>
      </AppButton>
      <AppButton $open>
        <Ico w={22} h={19} stroke="none"><path fill="#e8a01c" d="M0 0h9l2 3h-11z" /><path fill="#fbd45f" d="M0 2h22v17H0z" /><path fill="#3c8fd8" d="M4 10h14v9h-4v-4.500H8V19H4z" /><path fill="#e7b03a" d="M0 2h11v2H0z" /></Ico>
      </AppButton>
      <AppButton>
        <Ico w={24} h={24} stroke="none"><rect width="24" height="24" rx="11" fill="#0b5cff" /><path d="M6.500 6.200h10.500L7.500 17.300h10.500" stroke="#fff" strokeWidth="2.800" fill="none" /></Ico>
      </AppButton>
      <AppButton>
        <Ico w={24} h={24} stroke="none"><path fill="#eef0f1" d="M1 0h11l5 5v17H1z" /><path fill="#b8bfc3" d="M12 0v5h5z" /><path d="M3 3h7M3 6h8M3 9h6M3 12h5M3 15h5M3 18h5" stroke="#8c9599" /><path fill="#3a76a8" d="M13 9h5c2 0 3 1 3 3v4h-6c-2 0-3 1-3 3H9v-6h8v-1h-5v-1z" /><path fill="#fcd244" d="M23 13c2 2 1 6-1 7h-5v1h4v3h-6c-2 0-3-2-3-4s2-3 4-3h5z" /></Ico>
      </AppButton>
      <AppButton $on>
        <Ico w={24} h={24} stroke="none"><circle cx="12" cy="12" r="12" fill="#fff" /><path fill="#e33b2e" d="M1.600 6A12 12 0 0 1 22.400 6H12a6 6 0 0 0-5.200 9z" /><path fill="#fbc116" d="M22.400 6A12 12 0 0 1 12 24l5.200-9A6 6 0 0 0 12 6z" /><path fill="#2da94f" d="M12 24A12 12 0 0 1 1.600 6l5.200 9a6 6 0 0 0 10.400 0z" /><circle cx="12" cy="12" r="5.800" fill="#fff" /><circle cx="12" cy="12" r="4.600" fill="#3f82f0" /></Ico>
      </AppButton>
      <AppButton $open>
        <Ico w={24} h={24} stroke="none"><path fill="#1f8ad2" d="M17 0l6 3v18l-6 3L6 13l-4 3-2-1.500L2.500 12 0 9.500 2 8l4 3z" /><path fill="#35aef2" d="M17 0l6 3v18l-6 3z" /><path fill="#203840" d="M17 6.500v11L10 12z" /></Ico>
      </AppButton>
      <Ico w={23} h={16} ml={141} stroke="#fff" strokeWidth="1.300"><path d="M1 1h18.500v14H3a2 2 0 0 1-2-2zM19.500 4H22v9a2 2 0 0 1-2 2M4 4.500h12.500M12 8h4.500M12 11h4.500M4 7.500h5v4H4z" /></Ico>
      <TrayText $ml={9}><Fit w={29}>29°C</Fit><Fit w={79} ml={9}>Partly cloudy</Fit></TrayText>
      <Ico w={11} h={6} ml={25} stroke="#fff" strokeWidth="1.200"><path d="M.5 6l5-5 5 5" /></Ico>
      <Ico w={11} h={17} ml={14} stroke="#fff"><path d="M.5 5.500h6v6.500h-6zM6.500 8L10 6v5.500L6.500 9.500M2 2.500c2-2 5-2 7 0M2 14.500c2 2 5 2 7 0" /></Ico>
      <Ico w={15} h={10} ml={11} stroke="#fff"><path d="M.5.500h12v8.500H.5zM13.500 3v3.500" /><path d="M2.500 2.500h7v4.500h-7z" fill="#fff" /></Ico>
      <Ico w={13} h={13} ml={11} stroke="#c9ced3"><path d="M.5 11A11 11 0 0 1 12 1M3.500 12A8.500 8.500 0 0 1 12 4M6.500 12.500A6 6 0 0 1 12 7M9 13a3.500 3.500 0 0 1 3.500-3" /></Ico>
      <Ico w={17} h={14} ml={8} stroke="#fff"><path d="M.5 4.500H3L6.500 1.500v11L3 9.500H.5zM9 4.500c1.500 1.500 1.500 3.500 0 5M11.500 2.500c3 2.500 3 6.500 0 9M14 .5c4 3.500 4 9.500 0 13" /></Ico>
      <TrayText $s={12} $ml={9}><Fit w={23}>ENG</Fit></TrayText>
      <Clock><Fit w={27}>22:33</Fit><Fit w={58}>20-09-2023</Fit></Clock>
      <Ico w={16} h={16} ml={18} stroke="#fff"><path d="M.5.500h15v12H11L8 15.500 5.500 12.500h-5z" /></Ico>
      <ShowDesktop />
    </Taskbar>
  );
}

export default function App() {
  return (
    <Screen>
      <Global />
      <Browser />
      <Viewport>
        <Page>
          <Heading><Fit w={286} ml={1}>Audio &amp; Video Show</Fit></Heading>
          <Player>
            <Ico w={10} h={12} ml={22} stroke="none"><path d="M0 0v12l10-6z" fill="#000" /></Ico>
            <PlayerTime><Fit w={66}>0:00 / 3:16</Fit></PlayerTime>
            <Track />
            <IconHold $w={18} $ml={23} $c="#000"><MdVolumeUp size={21} /></IconHold>
            <Ico w={4} h={14} ml={22} stroke="none" fill="#000"><circle cx="2" cy="2" r="1.800" /><circle cx="2" cy="7" r="1.800" /><circle cx="2" cy="12" r="1.800" /></Ico>
          </Player>
          <Video><Presentation /></Video>
          <Menu>
            <MenuRow $on><IconHold $w={18} $c="#000"><MdFileDownload size={20} /></IconHold><Fit w={53} ml={13}>Download</Fit></MenuRow>
            <MenuRow><IconHold $w={18} $c="#000"><MdSlowMotionVideo size={20} /></IconHold><Fit w={85} ml={13}>Playback speed</Fit></MenuRow>
          </Menu>
        </Page>
        <VerticalBar>
          <Ico w={8} h={4} stroke="none"><path d="M0 4h8L4 0z" fill="#a3a3a3" /></Ico>
          <VerticalThumb />
          <Ico w={8} h={4} stroke="none"><path d="M0 0h8L4 4z" fill="#505050" /></Ico>
        </VerticalBar>
      </Viewport>
      <HorizontalBar>
        <Ico w={4} h={8} ml={6} stroke="none"><path d="M4 0v8L0 4z" fill="#a3a3a3" /></Ico>
        <HorizontalThumb />
        <Ico w={4} h={8} ml={40} stroke="none"><path d="M0 0v8l4-4z" fill="#505050" /></Ico>
        <BarCorner />
      </HorizontalBar>
      <TaskbarView />
    </Screen>
  );
}
